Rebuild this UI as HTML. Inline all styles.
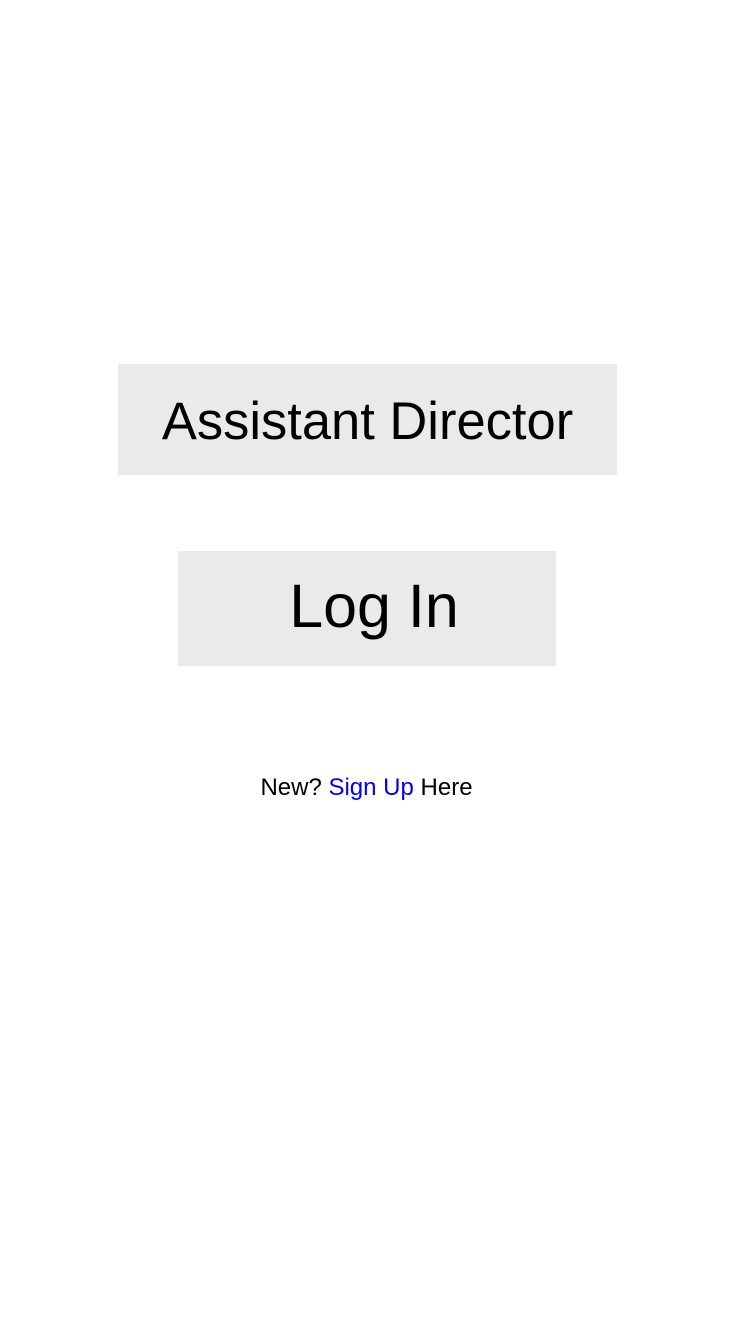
<!DOCTYPE html>
<html><head><style>
body{margin:0;width:750px;height:1334px;background:#fff;font-family:"Liberation Sans",Arial,sans-serif;position:relative;overflow:hidden}
.b{position:absolute;background:#eaeaea;color:#000;text-align:center;box-sizing:border-box}
</style></head><body>
<div class="b" style="left:118px;top:364px;width:499px;height:111px;line-height:115px;font-size:52.5px">Assistant Director</div>
<div class="b" style="left:178px;top:551px;width:378px;height:115px;line-height:110px;font-size:61px;padding-left:14px">Log In</div>
<div style="position:absolute;left:0;width:733px;top:774px;text-align:center;font-size:24px;color:#000">New? <span style="color:#0000ff">Sign Up</span> Here</div>
</body></html>
